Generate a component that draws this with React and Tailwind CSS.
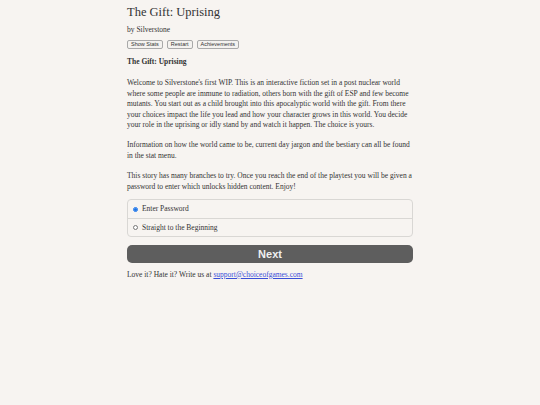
import { useState } from 'react';

const serif = { fontFamily: '"Liberation Serif", serif' };

function SmallButton({ children }) {
  return (
    <button className="h-[9px] px-[3px] border border-[#a9a9a9] rounded-[2px] bg-[#f4f2ef] text-[5.5px] leading-none text-[#333] font-['Liberation_Sans',sans-serif]">
      {children}
    </button>
  );
}

export default function App() {
  const [choice, setChoice] = useState('password');

  const options = [
    { id: 'password', label: 'Enter Password' },
    { id: 'start', label: 'Straight to the Beginning' },
  ];

  return (
    <div className="min-h-[405px] w-full bg-[#f7f4f1] text-[#333]" style={serif}>
      <div className="w-[286px] mx-auto pt-[5px]">
        {/* Header */}
        <h1 className="text-[12.5px] leading-[15px] font-normal">The Gift: Uprising</h1>
        <p className="text-[7.5px] leading-[10px] mt-[5px]">by Silverstone</p>
        <div className="flex gap-[4px] mt-[5px]">
          <SmallButton>Show Stats</SmallButton>
          <SmallButton>Restart</SmallButton>
          <SmallButton>Achievements</SmallButton>
        </div>

        {/* Story text */}
        <div className="text-[7.5px] leading-[10.4px] mt-[8px]">
          <p className="font-bold">The Gift: Uprising</p>
          <p className="mt-[11px]">
            Welcome to Silverstone's first WIP. This is an interactive fiction set in a post nuclear world where some
            people are immune to radiation, others born with the gift of ESP and few become mutants. You start out as a
            child brought into this apocalyptic world with the gift. From there your choices impact the life you lead and
            how your character grows in this world. You decide your role in the uprising or idly stand by and watch it
            happen. The choice is yours.
          </p>
          <p className="mt-[10px]">
            Information on how the world came to be, current day jargon and the bestiary can all be found in the stat
            menu.
          </p>
          <p className="mt-[10px]">
            This story has many branches to try. Once you reach the end of the playtest you will be given a password to
            enter which unlocks hidden content. Enjoy!
          </p>
        </div>

        {/* Choices */}
        <div className="mt-[7px] border border-[#d9d7d4] rounded-[4px] overflow-hidden">
          {options.map((o, i) => (
            <label
              key={o.id}
              className={`flex items-center gap-[4px] h-[18px] px-[5px] text-[7.5px] cursor-pointer ${i > 0 ? 'border-t border-[#d9d7d4]' : ''}`}
            >
              <input
                type="radio"
                name="choice"
                checked={choice === o.id}
                onChange={() => setChoice(o.id)}
                className="w-[5px] h-[5px] m-0 accent-[#1a73e8]"
              />
              {o.label}
            </label>
          ))}
        </div>

        <button className="mt-[8px] w-full h-[18px] rounded-[5px] bg-[#5e5e5e] text-[#f0f0f0] text-[11px] font-bold font-['Liberation_Sans',sans-serif]">
          Next
        </button>

        <p className="text-[7.5px] leading-[10px] mt-[5px]">
          Love it? Hate it? Write us at{' '}
          <a href="#" className="text-[#3a4fd8] underline">
            support@choiceofgames.com
          </a>
        </p>
      </div>
    </div>
  );
}
